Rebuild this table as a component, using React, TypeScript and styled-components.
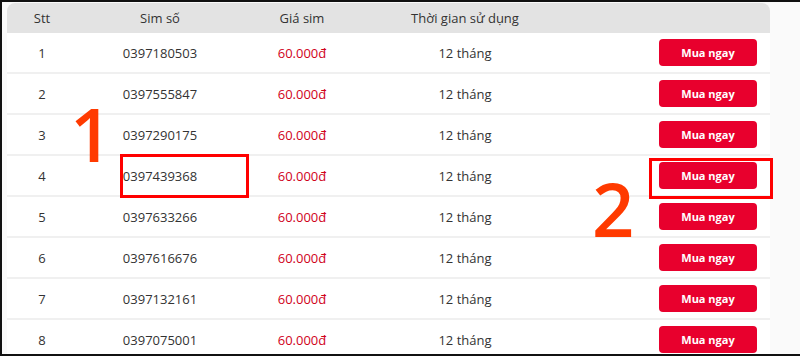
import React from 'react';
import styled, { createGlobalStyle } from 'styled-components';

const Global = createGlobalStyle`
  html, body {
    margin: 0;
    padding: 0;
    background: #fafafa;
  }
  * { box-sizing: border-box; }
`;

const Frame = styled.div`
  position: relative;
  width: 800px;
  height: 356px;
  overflow: hidden;
  border-top: 2px solid #111;
  border-left: 2px solid #111;
  border-bottom: 2px solid #111;
  padding: 1px 0 0 5px;
  font-family: 'Open Sans', 'Noto Sans', sans-serif;
  font-size: 13px;
  color: #333;
`;

const Table = styled.div`
  width: 763px;
  background: #fff;
  border-radius: 8px 8px 0 0;
  overflow: hidden;
`;

const Row = styled.div<{ head?: boolean }>`
  display: grid;
  grid-template-columns: 70px 166px 118px 208px 1fr;
  align-items: center;
  height: ${p => (p.head ? '30px' : '41px')};
  background: ${p => (p.head ? '#e3e3e3' : '#fff')};
  border-bottom: ${p => (p.head ? 'none' : '2px solid #f0f0f0')};
`;

const Cell = styled.div<{ red?: boolean }>`
  text-align: center;
  color: ${p => (p.red ? '#d0021b' : '#333')};
  white-space: nowrap;
`;

const ActionCell = styled.div`
  display: flex;
  justify-content: flex-end;
  padding-right: 13px;
`;

const BuyButton = styled.button`
  width: 98px;
  height: 27px;
  border: none;
  border-radius: 4px;
  background: #e8002d;
  color: #fff;
  font-family: 'Open Sans', 'Noto Sans', sans-serif;
  font-size: 11px;
  font-weight: 700;
  cursor: pointer;
`;

const Marker = styled.div<{ x: number; y: number }>`
  position: absolute;
  left: ${p => p.x}px;
  top: ${p => p.y}px;
  font-family: 'Open Sans', 'Noto Sans', sans-serif;
  font-size: 74px;
  font-weight: 600;
  line-height: 1;
  color: #ff3a00;
`;

const Highlight = styled.div<{ x: number; y: number; w: number; h: number }>`
  position: absolute;
  left: ${p => p.x}px;
  top: ${p => p.y}px;
  width: ${p => p.w}px;
  height: ${p => p.h}px;
  border: 3px solid #f00;
`;

const sims = [
  '0397180503',
  '0397555847',
  '0397290175',
  '0397439368',
  '0397633266',
  '0397616676',
  '0397132161',
  '0397075001',
];

const App = () => {
  return (
    <Frame>
      <Global />
      <Table>
        <Row head>
          <Cell>Stt</Cell>
          <Cell>Sim số</Cell>
          <Cell>Giá sim</Cell>
          <Cell>Thời gian sử dụng</Cell>
          <div />
        </Row>
        {sims.map((s, i) => (
          <Row key={s}>
            <Cell>{i + 1}</Cell>
            <Cell>{s}</Cell>
            <Cell red>60.000đ</Cell>
            <Cell>12 tháng</Cell>
            <ActionCell>
              <BuyButton>Mua ngay</BuyButton>
            </ActionCell>
          </Row>
        ))}
      </Table>
      <Marker x={68} y={95}>1</Marker>
      <Highlight x={118} y={152} w={129} h={44} />
      <Marker x={590} y={170}>2</Marker>
      <Highlight x={647} y={156} w={124} h={41} />
    </Frame>
  );
};

export default App;
